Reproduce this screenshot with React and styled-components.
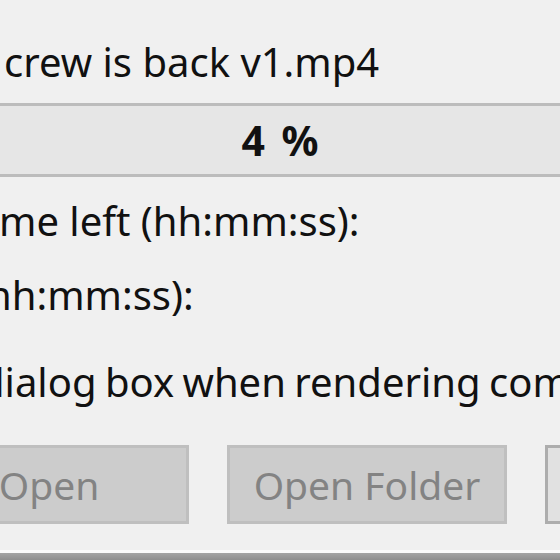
import styled, { createGlobalStyle } from 'styled-components'

const GlobalStyle = createGlobalStyle`
	html,
	body {
		margin: 0;
		padding: 0;
		background: #f0f0f0;
		overflow: hidden;
	}
`

const Dialog = styled.main`
	width: 560px;
	height: 560px;
	overflow: hidden;
	background: #f0f0f0;
	color: #111111;
	font-family: 'Noto Sans', 'Open Sans', sans-serif;
	font-size: 40px;
	display: flex;
	flex-direction: column;
	box-sizing: border-box;
	padding-top: 38px;
`

const Label = styled.div`
	line-height: 48px;
	height: 48px;
	white-space: nowrap;
	text-indent: ${(p) => p.$indent || 0}px;
	word-spacing: ${(p) => p.$words || 0}px;
	margin-top: ${(p) => p.$top || 0}px;
`

const Progress = styled.div`
	margin: 17px -40px 0;
	height: 68px;
	border: 3px solid #bcbcbc;
	background: #e6e6e6;
	display: flex;
	align-items: center;
	justify-content: center;
	font-weight: 700;
	font-size: 41px;
	word-spacing: 6px;
	color: #111;
`

const ButtonRow = styled.div`
	display: flex;
	gap: 38px;
	margin-top: 39px;
	margin-left: -91px;
`

const Button = styled.button`
	flex: none;
	width: 280px;
	height: 79px;
	box-sizing: border-box;
	font-family: inherit;
	font-size: 39px;
	border: 3px solid ${(p) => (p.disabled ? '#bfbfbf' : '#adadad')};
	background: ${(p) => (p.disabled ? '#cccccc' : '#e1e1e1')};
	color: ${(p) => (p.disabled ? '#838383' : '#111111')};
	padding: 0;
`

const BottomEdge = styled.div`
	margin-top: auto;
	height: 7px;
	border-top: 3px solid #fbfbfb;
	background: linear-gradient(#a5a5a5, #8f8f8f);
`

export default () => {
	return (
		<>
			<GlobalStyle />
			<Dialog>
				<Label $indent={4}>crew is back v1.mp4</Label>
				<Progress>4 %</Progress>
				<Label $top={20} $indent={-1}>
					me left (hh:mm:ss):
				</Label>
				<Label $top={26} $indent={-13}>
					hh:mm:ss):
				</Label>
				<Label $top={39} $indent={-20} $words={-2}>
					dialog box when rendering completes
				</Label>
				<ButtonRow>
					<Button disabled>Open</Button>
					<Button disabled>Open Folder</Button>
					<Button>Close</Button>
				</ButtonRow>
				<BottomEdge />
			</Dialog>
		</>
	)
}
